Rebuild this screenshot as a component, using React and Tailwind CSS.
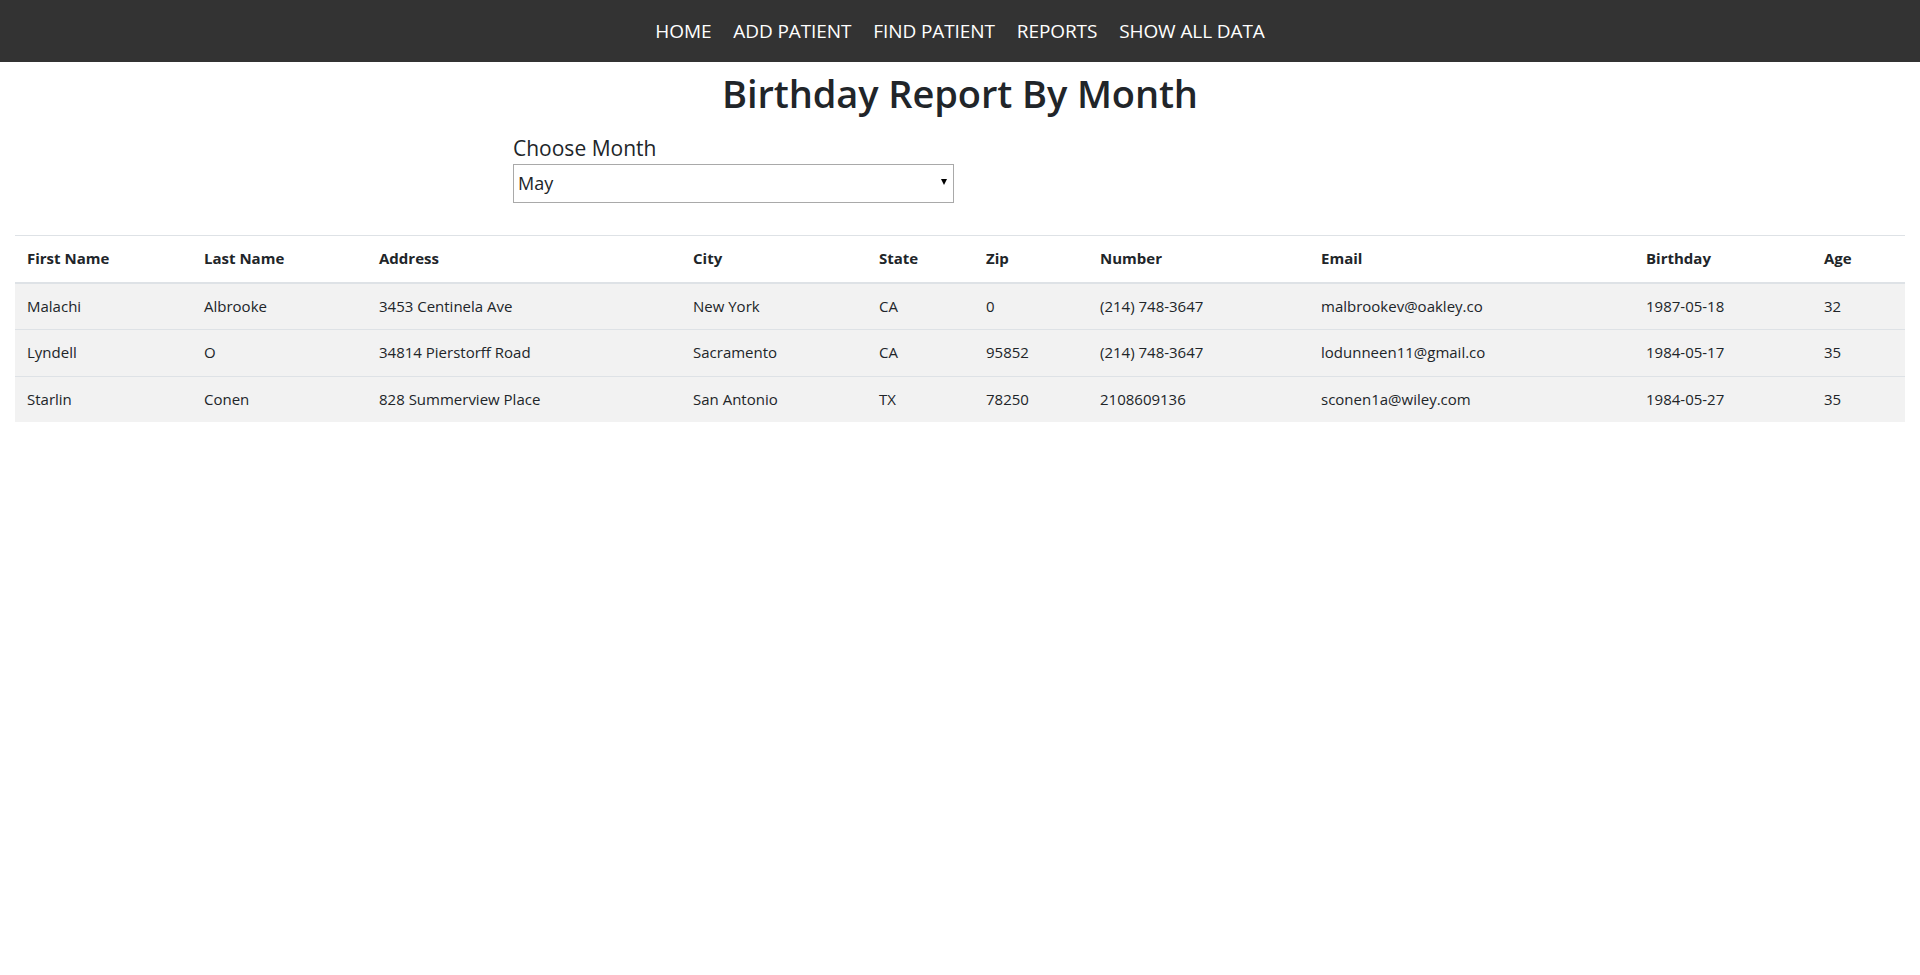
import React from "react";

const cols = [
  { label: "First Name", w: "w-[177px]" },
  { label: "Last Name", w: "w-[175px]" },
  { label: "Address", w: "w-[314px]" },
  { label: "City", w: "w-[186px]" },
  { label: "State", w: "w-[107px]" },
  { label: "Zip", w: "w-[114px]" },
  { label: "Number", w: "w-[221px]" },
  { label: "Email", w: "w-[325px]" },
  { label: "Birthday", w: "w-[178px]" },
  { label: "Age", w: "w-[93px]" },
];

const rows = [
  ["Malachi", "Albrooke", "3453 Centinela Ave", "New York", "CA", "0", "(214) 748-3647", "malbrookev@oakley.co", "1987-05-18", "32"],
  ["Lyndell", "O", "34814 Pierstorff Road", "Sacramento", "CA", "95852", "(214) 748-3647", "lodunneen11@gmail.co", "1984-05-17", "35"],
  ["Starlin", "Conen", "828 Summerview Place", "San Antonio", "TX", "78250", "2108609136", "sconen1a@wiley.com", "1984-05-27", "35"],
];

const nav = ["HOME", "ADD PATIENT", "FIND PATIENT", "REPORTS", "SHOW ALL DATA"];

export default function App() {
  return (
    <div className="min-h-[975px] bg-white text-[#212529] font-['Open_Sans',_'Noto_Sans',_sans-serif]">
      <nav className="h-[62px] bg-[#333333] flex items-center justify-center">
        <ul className="flex items-center">
          {nav.map((n) => (
            <li key={n}>
              <a href="#" className="block px-[11px] text-[19px] leading-[28px] text-white tracking-[-0.1px]">
                {n}
              </a>
            </li>
          ))}
        </ul>
      </nav>

      <h1 className="mt-[9px] text-center text-[38px] leading-[44px] font-semibold tracking-[-0.1px]">
        Birthday Report By Month
      </h1>

      <div className="ml-[513px] w-[441px] mt-[19px]">
        <label className="block text-[21px] leading-[28px] text-[#212529]">Choose Month</label>
        <div className="relative mt-[2px]">
          <select
            defaultValue="May"
            className="block w-full h-[39px] appearance-none border border-[#a9a9a9] bg-white pl-[4px] text-[18px] text-[#212529] outline-none"
          >
            {["January","February","March","April","May","June","July","August","September","October","November","December"].map((m) => (
              <option key={m}>{m}</option>
            ))}
          </select>
          <span className="pointer-events-none absolute right-[7px] top-[15px] w-0 h-0 border-l-[3.5px] border-r-[3.5px] border-t-[6px] border-l-transparent border-r-transparent border-t-black" />
        </div>
      </div>

      <div className="px-[15px] mt-[32px]">
        <table className="w-full table-fixed border-collapse text-[15px] leading-[21.6px]">
          <thead>
            <tr>
              {cols.map((c) => (
                <th
                  key={c.label}
                  className={`${c.w} text-left font-bold px-[12px] py-[12px] border-t border-t-[#dee2e6] border-b-2 border-b-[#dee2e6]`}
                >
                  {c.label}
                </th>
              ))}
            </tr>
          </thead>
          <tbody>
            {rows.map((r, i) => (
              <tr key={i} className="bg-[#f2f2f2]">
                {r.map((v, j) => (
                  <td key={j} className="px-[12px] py-[12px] border-t border-t-[#dee2e6] whitespace-nowrap">
                    {v}
                  </td>
                ))}
              </tr>
            ))}
          </tbody>
        </table>
      </div>
    </div>
  );
}
